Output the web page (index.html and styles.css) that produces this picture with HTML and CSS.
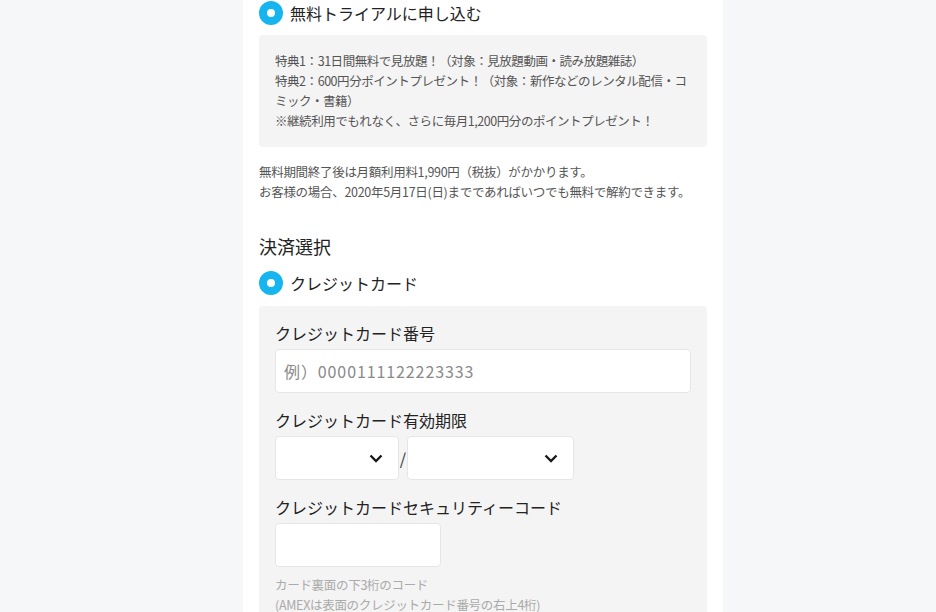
FILE: index.html
```html
<!DOCTYPE html>
<html>
	<head>
		<meta charset="utf-8">
		<link rel="stylesheet" href="styles.css">
	</head>
	<body>
		<div class="page">
			<div class="radioRow">
				<span class="radio"></span>
				<label>無料トライアルに申し込む</label>
			</div>

			<div class="benefits">
				特典1：31日間無料で見放題！（対象：見放題動画・読み放題雑誌）<br>
				特典2：600円分ポイントプレゼント！（対象：新作などのレンタル配信・コ<br>ミック・書籍）<br>
				※継続利用でもれなく、さらに毎月1,200円分のポイントプレゼント！
			</div>

			<p class="notice">
				無料期間終了後は月額利用料1,990円（税抜）がかかります。<br>
				お客様の場合、2020年5月17日(日)までであればいつでも無料で解約できます。
			</p>

			<h2 class="sectionTitle">決済選択</h2>

			<div class="radioRow">
				<span class="radio"></span>
				<label>クレジットカード</label>
			</div>

			<div class="cardForm">
				<div class="field">
					<label>クレジットカード番号</label>
					<input class="textInput" type="text" placeholder="例）0000111122223333">
				</div>

				<div class="field">
					<label>クレジットカード有効期限</label>
					<div class="expiry">
						<div class="select month">
							<svg width="14" height="9" viewBox="0 0 14 9"><path d="M1.5 1.5 L7 7 L12.5 1.5" fill="none" stroke="#1a1a1a" stroke-width="2.4"/></svg>
						</div>
						<span class="slash">/</span>
						<div class="select year">
							<svg width="14" height="9" viewBox="0 0 14 9"><path d="M1.5 1.5 L7 7 L12.5 1.5" fill="none" stroke="#1a1a1a" stroke-width="2.4"/></svg>
						</div>
					</div>
				</div>

				<div class="field">
					<label>クレジットカードセキュリティーコード</label>
					<input class="textInput cvc" type="text">
					<p class="hint">
						カード裏面の下3桁のコード<br>
						(AMEXは表面のクレジットカード番号の右上4桁)
					</p>
				</div>
			</div>
		</div>
	</body>
</html>
```

FILE: styles.css
```css
body {
	margin: 0;
	padding-left: 30px;
	background-color: #f6f7f9;
	color: #333333;
	font-family: "Noto Sans CJK JP", "Noto Sans", sans-serif;
}

.page {
	width: 448px;
	min-height: 612px;
	margin: 0 auto;
	padding: 1px 16px 0 16px;
	background-color: #ffffff;
}

.radioRow {
	display: flex;
	align-items: center;
	gap: 7px;
	height: 24px;
}
.radioRow label {
	font-size: 16px;
	line-height: 24px;
	color: #222222;
}

.radio {
	box-sizing: border-box;
	width: 24px;
	height: 24px;
	border-radius: 50%;
	border: 8px solid #17b5ef;
	background-color: #ffffff;
}

.benefits {
	margin-top: 10px;
	padding: 16px;
	background-color: #f4f4f4;
	border-radius: 4px;
	font-size: 12.5px;
	letter-spacing: -0.45px;
	line-height: 20px;
	color: #555555;
	white-space: nowrap;
}

.notice {
	margin: 15px 0 0 0;
	font-size: 12.5px;
	letter-spacing: -0.3px;
	line-height: 20px;
	color: #555555;
	white-space: nowrap;
}

.sectionTitle {
	margin: 31px 0 12px 0;
	font-size: 18px;
	font-weight: normal;
	line-height: 26px;
	color: #222222;
}

.cardForm {
	margin-top: 11px;
	padding: 15px 16px 20px 16px;
	background-color: #f4f4f4;
	border-radius: 4px;
}

.field {
	margin-bottom: 15px;
}
.field label {
	display: block;
	margin-bottom: 4px;
	font-size: 16px;
	line-height: 24px;
	color: #222222;
}

.textInput {
	box-sizing: border-box;
	width: 416px;
	height: 44px;
	padding: 0 8px;
	border: 1px solid #e6e6e6;
	border-radius: 4px;
	background-color: #ffffff;
	font-family: inherit;
	font-size: 16px;
	letter-spacing: 0.9px;
	color: #333333;
}
.textInput::placeholder {
	color: #8a8a8a;
}
.textInput.cvc {
	width: 166px;
	display: block;
}

.expiry {
	display: flex;
	align-items: center;
}
.select {
	box-sizing: border-box;
	height: 44px;
	display: flex;
	align-items: center;
	justify-content: flex-end;
	padding-right: 15px;
	border: 1px solid #e6e6e6;
	border-radius: 4px;
	background-color: #ffffff;
}
.select.month {
	width: 124px;
}
.select.year {
	width: 167px;
}
.slash {
	width: 8px;
	text-align: center;
	font-size: 16px;
	color: #333333;
}

.hint {
	margin: 8px 0 0 0;
	font-size: 12.5px;
	letter-spacing: -0.3px;
	line-height: 20px;
	color: #aaaaaa;
	white-space: nowrap;
}
```
